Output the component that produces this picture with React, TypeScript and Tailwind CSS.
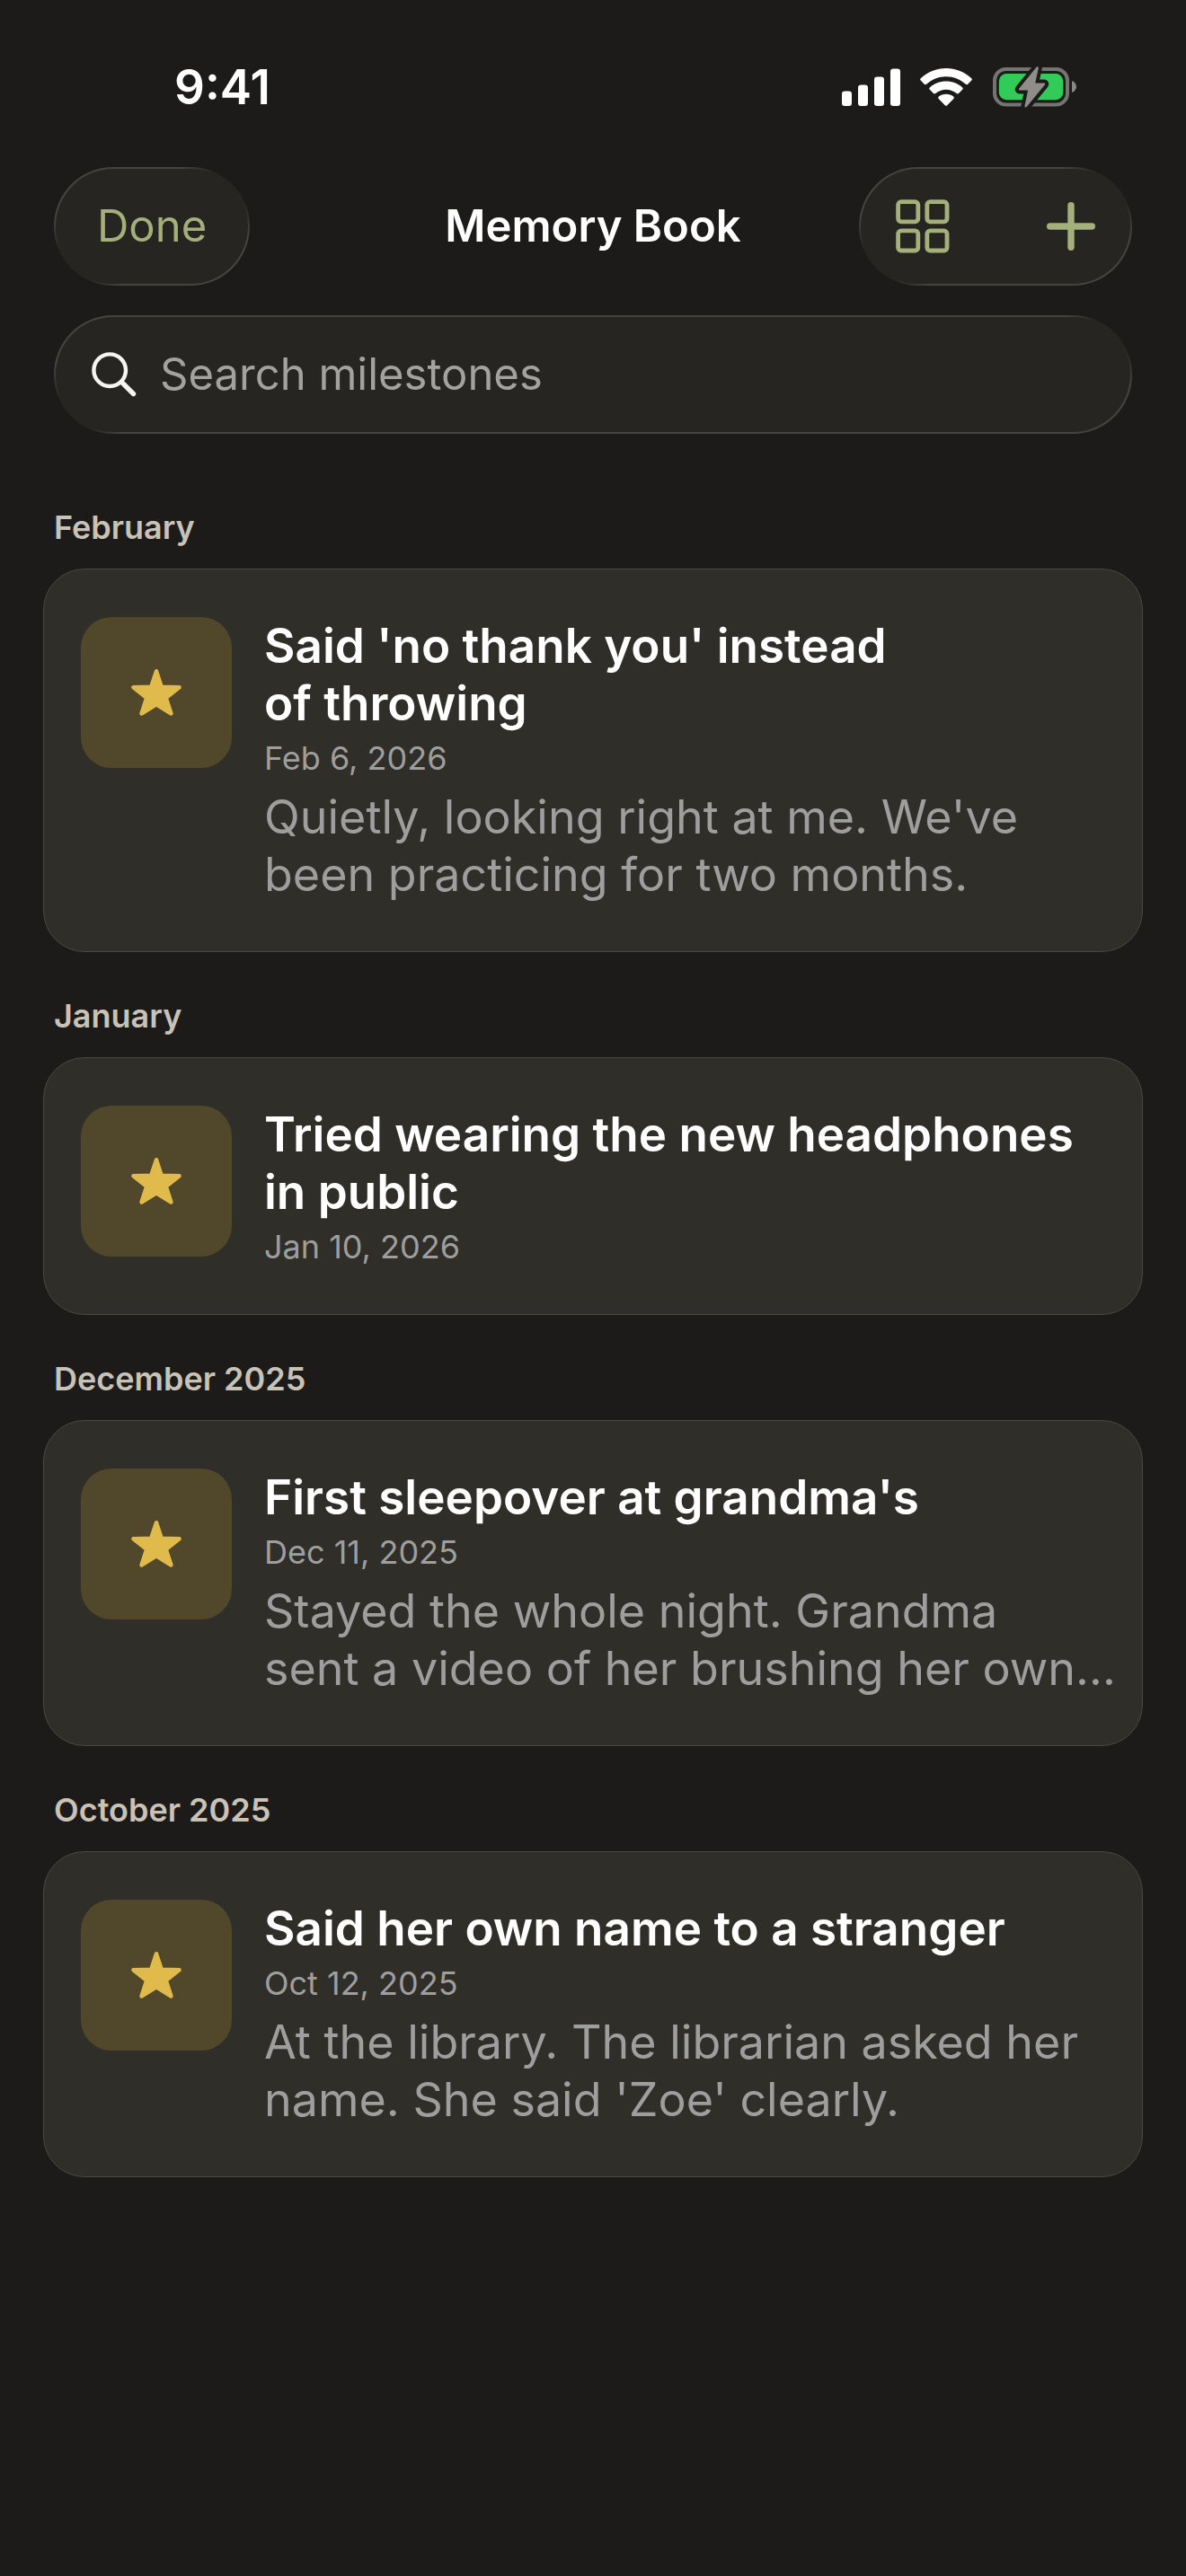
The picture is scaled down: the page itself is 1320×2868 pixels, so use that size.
import type { ReactNode } from "react";

interface Milestone {
	title: string;
	date: string;
	note?: string;
}

interface MilestoneSection {
	month: string;
	milestones: Milestone[];
}

const SECTIONS: MilestoneSection[] = [
	{
		month: "February",
		milestones: [
			{
				title: "Said 'no thank you' instead\nof throwing",
				date: "Feb 6, 2026",
				note: "Quietly, looking right at me. We've\nbeen practicing for two months.",
			},
		],
	},
	{
		month: "January",
		milestones: [
			{
				title: "Tried wearing the new headphones\nin public",
				date: "Jan 10, 2026",
			},
		],
	},
	{
		month: "December 2025",
		milestones: [
			{
				title: "First sleepover at grandma's",
				date: "Dec 11, 2025",
				note: "Stayed the whole night. Grandma\nsent a video of her brushing her own…",
			},
		],
	},
	{
		month: "October 2025",
		milestones: [
			{
				title: "Said her own name to a stranger",
				date: "Oct 12, 2025",
				note: "At the library. The librarian asked her\nname. She said 'Zoe' clearly.",
			},
		],
	},
];

function SignalIcon() {
	return (
		<svg width="65" height="42" viewBox="0 0 65 42" fill="white" aria-hidden="true">
			<rect x="0" y="25.5" width="11" height="16.5" rx="3.2" />
			<rect x="18" y="18.5" width="11" height="23.5" rx="3.2" />
			<rect x="36" y="9.5" width="11" height="32.5" rx="3.2" />
			<rect x="54" y="0.5" width="11" height="41.5" rx="3.2" />
		</svg>
	);
}

function WifiIcon() {
	return (
		<svg width="58" height="42" viewBox="0 0 58 42" fill="white" aria-hidden="true">
			<path d="M29 0C18.200 0 8.300 4.200 .7 11.200c-.7.700-.7 1.700 0 2.400l4.100 4.200c.6.600 1.600.6 2.300 0C13 12.400 20.600 9.200 29 9.200s16 3.200 21.900 8.600c.7.600 1.700.6 2.300 0l4.100-4.200c.7-.7.7-1.700 0-2.400C49.700 4.200 39.800 0 29 0Z" />
			<path d="M29 14.500c-7 0-13.300 2.600-18.200 6.900-.7.600-.7 1.700 0 2.400l4.200 4.200c.6.600 1.600.6 2.300.1 3.200-2.700 7.200-4.300 11.700-4.300s8.500 1.600 11.700 4.300c.7.500 1.700.5 2.300-.1l4.200-4.200c.7-.7.7-1.800 0-2.400-4.900-4.300-11.200-6.900-18.200-6.900Z" />
			<path d="M29 28.800c-3.100 0-6 1-8.200 2.700-.8.600-.8 1.700-.1 2.400l7.100 7.300c.7.700 1.700.7 2.400 0l7.100-7.300c.7-.7.700-1.800-.1-2.400-2.200-1.700-5.100-2.700-8.200-2.700Z" />
		</svg>
	);
}

function BatteryIcon() {
	const bolt =
		"M49.500 .8 30.200 24.500c-.8 1 -.3 2 .9 2h9L36.500 43.800c-.3 1.600 1.300 2.100 2.300 1L58.800 20.600c.9-1 .3-2.200-1-2.200H48.200L51.800 2c.3-1.700-1.300-2.300-2.300-1.200Z";
	return (
		<svg width="94" height="46" viewBox="0 0 94 46" fill="none" aria-hidden="true">
			<rect x="3" y="3" width="81" height="39.500" rx="12.500" stroke="#767472" strokeWidth="4" />
			<path d="M89 16c3 .9 5 3.600 5 6.500s-2 5.600-5 6.500v-13Z" fill="#8a8886" />
			<rect x="7.800" y="8" width="71.500" height="29.200" rx="8.500" fill="#30cb58" />
			<path d={bolt} fill="#1c1b19" stroke="#1c1b19" strokeWidth="8" strokeLinejoin="round" />
			<path d={bolt} fill="#8e8d8a" />
		</svg>
	);
}

function GridIcon() {
	return (
		<svg width="60" height="60" viewBox="0 0 60 60" fill="none" stroke="#a3b07a" strokeWidth="4.800" aria-hidden="true">
			<rect x="2.600" y="2.600" width="22.200" height="22.200" rx="3.500" />
			<rect x="34.800" y="2.600" width="22.200" height="22.200" rx="3.500" />
			<rect x="2.600" y="34.800" width="22.200" height="22.200" rx="3.500" />
			<rect x="34.800" y="34.800" width="22.200" height="22.200" rx="3.500" />
		</svg>
	);
}

function PlusIcon() {
	return (
		<svg width="54" height="54" viewBox="0 0 54 54" stroke="#a3b07a" strokeWidth="7.400" strokeLinecap="round" aria-hidden="true">
			<path d="M27 3.700v46.600M3.700 27h46.600" />
		</svg>
	);
}

function SearchIcon() {
	return (
		<svg width="50" height="50" viewBox="0 0 50 50" fill="none" stroke="#f5f4f1" strokeLinecap="round" className="shrink-0" aria-hidden="true">
			<circle cx="20.200" cy="20.200" r="17.800" strokeWidth="4.400" />
			<path d="M33.500 33.500 46.500 46.500" strokeWidth="5.400" />
		</svg>
	);
}

function StarIcon() {
	return (
		<svg width="60" height="56" viewBox="-30 0 60 56" fill="#e0bb4c" stroke="#e0bb4c" strokeWidth="4.400" strokeLinejoin="round" aria-hidden="true">
			<path d="M0 4.200 5.800 21.800 25.600 22.200 10.800 34 16.500 51.500 0 41.400-16.500 51.500-10.800 34-25.600 22.200-5.800 21.800Z" />
		</svg>
	);
}

// Rim light fades out at the top right and bottom left corners
const GLASS =
	"rounded-full border-2 border-transparent [background:linear-gradient(#262521,#262521)_padding-box,radial-gradient(circle_60px_at_right_20px_top_20px,#262521_40%,transparent)_border-box,radial-gradient(circle_60px_at_left_20px_bottom_20px,#262521_40%,transparent)_border-box,linear-gradient(#454440,#454440)_border-box]";

function GlassGroup({ children }: { children: ReactNode }) {
	return (
		<div className={`flex h-[132px] items-center gap-[108px] justify-self-end px-[39px] ${GLASS}`}>
			{children}
		</div>
	);
}

function StatusBar() {
	return (
		<div className="flex h-[186px] items-center justify-between pl-[194px] pr-[122px] pt-2">
			<time className="text-[53px] leading-[64px] font-semibold text-white">9:41</time>
			<div className="flex items-center gap-[22px]">
				<SignalIcon />
				<WifiIcon />
				<BatteryIcon />
			</div>
		</div>
	);
}

function MilestoneCard({ milestone }: { milestone: Milestone }) {
	return (
		<li className="flex items-start gap-9 rounded-[46px] border border-[#4a493e] bg-[#2f2e28] py-[53px] pr-5 pl-[41px]">
			<div className="flex size-[168px] shrink-0 items-center justify-center rounded-[34px] bg-[#51472b]">
				<StarIcon />
			</div>
			<div className="min-w-0 flex-1">
				<h3 className="text-[53px] leading-[64px] font-semibold whitespace-pre-line text-white">
					{milestone.title}
				</h3>
				<p className="mt-[7px] text-[36px] leading-[44px] text-[#9f9e9f]">{milestone.date}</p>
				{milestone.note && (
					<p className="mt-3 text-[52px] leading-[64px] whitespace-pre-line text-[#9f9e9f]">
						{milestone.note}
					</p>
				)}
			</div>
		</li>
	);
}

export default function App() {
	return (
		<div className="min-h-screen bg-[#1c1b19] pb-16 font-['Inter',sans-serif]">
			<StatusBar />

			<header className="grid grid-cols-[1fr_auto_1fr] items-center px-[60px]">
				<button
					type="button"
					className={`h-[132px] justify-self-start px-[46px] text-[49px] leading-[64px] text-[#a3b07a] ${GLASS}`}
				>
					Done
				</button>
				<h1 className="text-[49px] leading-[64px] font-semibold text-white">Memory Book</h1>
				<GlassGroup>
					<button type="button" aria-label="Grid view">
						<GridIcon />
					</button>
					<button type="button" aria-label="Add milestone">
						<PlusIcon />
					</button>
				</GlassGroup>
			</header>

			<label className={`mx-[60px] mt-[33px] flex h-[132px] items-center gap-[26px] px-10 ${GLASS}`}>
				<SearchIcon />
				<input
					type="search"
					aria-label="Search milestones"
					placeholder="Search milestones"
					className="min-w-0 flex-1 bg-transparent text-[49px] leading-[64px] text-white outline-none placeholder:text-[#a3a29e]"
				/>
			</label>

			<main className="mt-[82px] flex flex-col gap-[49px] px-12">
				{SECTIONS.map((section) => (
					<section key={section.month}>
						<h2 className="mb-6 px-3 text-[36px] leading-[44px] font-semibold text-[#c8c3b6]">
							{section.month}
						</h2>
						<ul className="flex flex-col gap-6">
							{section.milestones.map((milestone) => (
								<MilestoneCard key={milestone.title} milestone={milestone} />
							))}
						</ul>
					</section>
				))}
			</main>
		</div>
	);
}
